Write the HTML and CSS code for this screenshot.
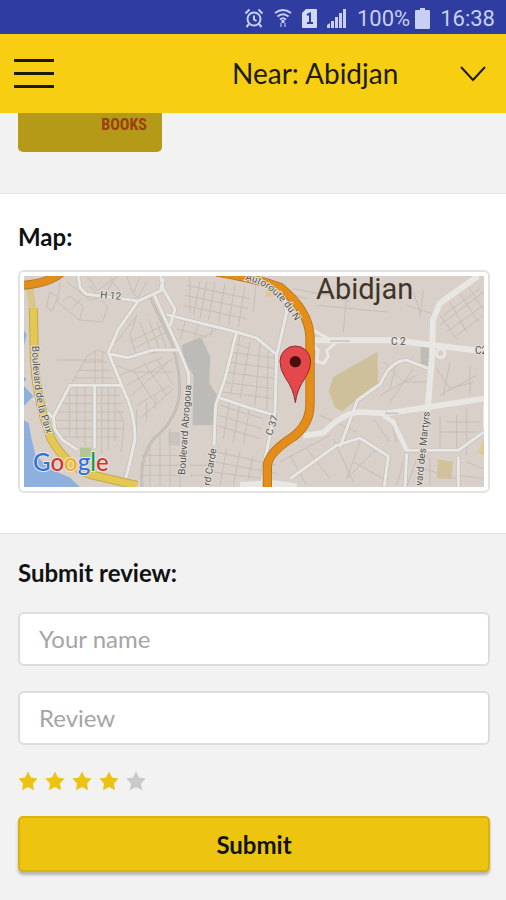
FILE: index.html
```html
<!DOCTYPE html>
<html lang="en">
<head>
    <meta charset="utf-8">
    <meta name="viewport" content="width=device-width, initial-scale=1">
    <title>Near: Abidjan</title>
    <link rel="stylesheet" href="styles.css">
</head>
<body>
    <div class="status-bar">
        <svg class="icon-alarm" width="20" height="20" viewBox="0 0 20 20" fill="none" stroke="#c9cff0" stroke-width="2">
            <circle cx="10" cy="11" r="6.5"/>
            <path d="M10 7.500v4l2.500 1.500M1.500 5.500l4-4M18.500 5.500l-4-4M5 16l-2.500 3M15 16l2.500 3"/>
        </svg>
        <svg class="icon-wifi" width="18" height="20" viewBox="0 0 18 20" fill="none" stroke="#c9cff0" stroke-width="2">
            <path d="M1 5Q9-1 17 5M3.500 8.500Q9 4 14.500 8.500M6 11.500Q9 9 12 11.500"/>
            <path d="M9 12v3" stroke-width="3"/>
            <path d="M7 15v4M11 15v4" stroke="#7f8bd4"/>
        </svg>
        <svg class="icon-sim" width="15" height="19" viewBox="0 0 15 19">
            <path d="M4 0h10a1 1 0 0 1 1 1v17a1 1 0 0 1-1 1H1a1 1 0 0 1-1-1V4z" fill="#d3d8f3"/>
            <path d="M5 6l3-1.500v9M5 14h6" fill="none" stroke="#2e3d9f" stroke-width="2"/>
        </svg>
        <svg class="icon-signal" width="20" height="19" viewBox="0 0 20 19" fill="#c9cff0">
            <path d="M0 19v-3l3-2v5zM4 12h3v7H4zM8 8h3v11H8zM12 4h3v15h-3zM16 0h3v19h-3z"/>
        </svg>
        <span class="battery-level">100%</span>
        <svg class="icon-battery" width="15" height="21" viewBox="0 0 15 21" fill="#c9cff0">
            <path d="M5 0h5v2h4a1 1 0 0 1 1 1v17a1 1 0 0 1-1 1H1a1 1 0 0 1-1-1V3a1 1 0 0 1 1-1h4z"/>
        </svg>
        <span>16:38</span>
    </div>

    <header class="header">
        <button class="menu-button" type="button" aria-label="Menu">
            <span></span><span></span><span></span>
        </button>
        <div class="location">
            <select aria-label="Location">
                <option>Near: Abidjan</option>
            </select>
            <svg class="chevron" width="26" height="16" viewBox="0 0 26 16" fill="none" stroke="#1c1a08" stroke-width="2">
                <path d="M1 1l12 13L25 1"/>
            </svg>
        </div>
    </header>

    <section class="photo-section">
        <div class="photo">BOOKS</div>
    </section>

    <section class="map-section">
        <h2>Map:</h2>
        <div class="map-frame">
            <svg class="map" viewBox="0 0 460 211" role="img" aria-label="Map of Abidjan">
                <defs>
                    <path id="paix" d="M8 70Q9 112 16 138L28 174"/>
                    <path id="autoroute" d="M221 4Q252 9 275 52"/>
                </defs>
                <rect width="460" height="211" fill="#d8d0c9"/>
                <g transform="scale(.33333) translate(-72 -42)" fill="none" stroke-linejoin="round">
                    <!-- water and parks -->
                    <path d="M72 205l8 15-8 30zM72 345l8 5-8 10zM72 372l28 30-28 30zM72 475l14 8 8 45 12 50 45 44 60 25 28 28H72z" fill="#8eb0df"/>
                    <path d="M240 557h35v32h-35z" fill="#b4c594"/>
                    <path d="M545 250l58-26 28 60-3 80 22 34-12 92h-60l2-150-30-55z" fill="#bdbbb8"/>
                    <path d="M505 510h35v40h-35z" fill="#c9c4bf"/>
                    <path d="M1000 345l132-75 2 100-60 40-48 38-20-10-20-50z" fill="#cfc09c"/>
                    <path d="M1314 592l44 8-4 52-44-4z" fill="#d3c298"/>
                    <path d="M1452 530v50l-18-10zM795 88h30v16h-25z" fill="#dcca91"/>
                    <path d="M1262 255h28v60l-28-12z" fill="#bfbcb8"/>

                    <!-- small streets -->
                    <g stroke="#c6bfb9" stroke-width="3">
                        <path d="M200 58l70 56 50-12M180 62l-8 58 66 54 70 6 16-50M148 92l26 12-18 44-16-12zM190 116l20-14 40 32-12 40M215 140l28-30M268 70l50 60"/>
                        <path d="M262 42l30 44 60-44M350 42l-30 46M380 42l20 54M330 50l30 38M420 45l-20 50 20 18M440 60l-25 45"/>
                        <path d="M170 294h142M212 370l50-90 30-15 32 10M250 300h72M238 325h92M225 348h114M285 268v104M308 270v102"/>
                        <path d="M190 400h170M178 425h190M170 450h200M165 475h205M170 500h200M190 525h165M305 375v200M325 375v190M345 378v160M230 378v155M255 378v175M208 390v130M352 440l20 40-8 90"/>
                        <path d="M410 160l-20 60 20 60 120-20M390 240l120-60M400 260l120-60M420 180l35 90M445 170l35 95M470 180l30 80M350 240l60-80"/>
                        <path d="M350 310l50 20 120 0M360 340l130-55M380 370l140-80M395 400l110-100M400 325l60 90M430 300l70 100M470 290l50 80M410 430l100-60M420 470l100-90M410 440v60M440 420v60M465 400v40"/>
                        <path d="M430 580h110M430 610h110M425 640h115M450 540v135M480 520v155M510 500v175M540 570v105M570 640h60M570 610h60"/>
                        <path d="M570 42v110M600 60l-20 100M620 60l-20 110M645 60l-20 115M675 65l-20 115M705 70l-20 120M735 75l-20 120M560 70l190 40M555 100l190 40M550 130l190 40M530 200l90 25M560 165l-20 70M600 180l-20 50M640 190l-10 35"/>
                        <path d="M690 240l60 20M685 270l150 20M680 300l150 20M672 330l150 20M668 360l150 20M665 390l160 20M720 220l-28 180M750 240l-30 170M780 245l-15 185M805 260l-5 180M660 430l130 40M655 460l130 40M650 490l130 40M690 410l-20 120M720 420l-20 120M750 430l-20 115M600 232l50-30"/>
                        <path d="M650 570l180 40M645 600l185 35M640 630l150 20M680 560l-20 110M720 570l-20 100M760 580l-20 90M800 600l-15 75"/>
                        <path d="M770 42l-10 110M850 90l70 20M880 80l100 20M950 130l210 20M1040 100l-10 110M960 90l90 30M1220 130l90 30M1240 90l20 60M1270 85l-10 80"/>
                        <path d="M1330 160l110-80M1320 190l130-100M1340 210l110-80M1370 220l80-60M1350 120l50 90M1380 95l55 85M1405 75l47 70M1320 160l50 70"/>
                        <path d="M1150 300l60 60 70 0M1140 400l110-60M1170 420l70-100M1190 300l-20 80M1310 320l40 60 70-20M1320 400l110-60M1350 300l-20 100M1410 310v90"/>
                        <path d="M960 460l110 50M920 560l70 90M870 580l50 90M840 600l150-80M1000 530l60 130M1080 540l-40 110M1130 560l-90 90M1060 600l90 50M1120 470l50 70M1170 460l20 80"/>
                        <path d="M1320 460v110M1340 480h100M1320 510h110M1370 460v110M1400 440v140M1210 600l-20 70M1250 590l-30 85M1270 620l100 30M1290 590v80M1400 600l50 20M1380 640l72 10"/>
                    </g>

                    <!-- railway -->
                    <path d="M450 105l52 110q35 70 37 160t-78 155q-45 60-34 145" stroke="#bdb7b2" stroke-width="8"/>
                    <path d="M450 105l52 110q35 70 37 160t-78 155q-45 60-34 145" stroke="#d0c9c3" stroke-width="3"/>

                    <!-- white roads -->
                    <g stroke="#c4bfba" stroke-width="13">
                        <path d="M235 42l5 35 20 20 155 20 75-35-8-40M415 117l-60 85-30 70 45 110q36 70 35 150l-20 90-10 33M325 275l60 12 75-23h80M463 100l75 165 28 70v40M490 82l35 60-15 50M490 50l-8 32M500 158l210 52 60 18 60 50M710 210l-35 140-28 80-5 120M660 408l90 30 75 22"/>
                        <path d="M100 410l60 58 5 35 22 30 45 30M160 465l50-95h155M284 373v185"/>
                        <path d="M850 90l10 60-30 130-5 170-30 140-10 80M1020 555l52-140 70-50q30-72 80-70l62 24M870 650l140-100 70-22 85 55-12 90M1180 475l40 90h155l77-55M1220 575l-5 100M1375 585v90M1452 430v70"/>
                    </g>
                    <g stroke="#e9e7e4" stroke-width="9">
                        <path d="M235 42l5 35 20 20 155 20 75-35-8-40M415 117l-60 85-30 70 45 110q36 70 35 150l-20 90-10 33M325 275l60 12 75-23h80M463 100l75 165 28 70v40M490 82l35 60-15 50M490 50l-8 32M500 158l210 52 60 18 60 50M710 210l-35 140-28 80-5 120M660 408l90 30 75 22"/>
                        <path d="M100 410l60 58 5 35 22 30 45 30M160 465l50-95h155M284 373v185"/>
                        <path d="M850 90l10 60-30 130-5 170-30 140-10 80M1020 555l52-140 70-50q30-72 80-70l62 24M870 650l140-100 70-22 85 55-12 90M1180 475l40 90h155l77-55M1220 575l-5 100M1375 585v90M1452 430v70"/>
                        <path d="M930 200l60 32M935 245l20 20-5 32 20 8 15-22-5-18 30-25"/>
                        <circle cx="1322" cy="274" r="13"/>
                    </g>
                    <g stroke="#e9e7e4">
                        <path d="M925 235h260l140 18 127 15" stroke-width="18"/>
                        <path d="M1434 42l-115 82-20 50-3 110-15 180" stroke-width="18"/>
                        <path d="M910 522l60-10q60-60 110-62l80 4 292-44" stroke-width="17"/>
                        <path d="M1150 460l30 20 40 85" stroke-width="14"/>
                        <path d="M720 670l110-5 60 10" stroke-width="20"/>
                    </g>
                    <path d="M990 237h60M1155 454h40" stroke="#c7c3bf" stroke-width="5"/>

                    <!-- yellow and orange roads -->
                    <path d="M90 80l8 60" stroke="#d8c78b" stroke-width="22"/>
                    <path d="M100 138l3 150q4 120 50 242 45 80 118 108l140 32" stroke="#c2aa48" stroke-width="27"/>
                    <path d="M100 138l3 150q4 120 50 242 45 80 118 108l140 32" stroke="#e5c854" stroke-width="21"/>
                    <path d="M66 70q80-5 120-40" stroke="#ad7628" stroke-width="27"/>
                    <path d="M66 70q80-5 120-40" stroke="#e38d1d" stroke-width="22"/>
                    <path d="M650 30q120 20 190 46 88 70 90 150v200q0 60-50 98-78 50-78 90v70" stroke="#b5721b" stroke-width="28"/>
                    <path d="M650 30q120 20 190 46 88 70 90 150v200q0 60-50 98-78 50-78 90v70" stroke="#e48d18" stroke-width="23"/>

                    <!-- marker -->
                    <path d="M886 422q-5-40-30-75-16-23-16-49a46 46 0 0 1 92 0q0 26-16 49-25 35-30 75z" fill="#e4474c" stroke="#8f2e30" stroke-width="3"/>
                    <circle cx="886" cy="299" r="17" fill="#490e10"/>
                </g>

                <g class="map-labels">
                    <text x="76" y="22" transform="rotate(5 76 22)">H 12</text>
                    <text x="367" y="69">C 2</text>
                    <text x="451" y="78">C2</text>
                    <text x="248" y="160" transform="rotate(-72 248 160)">C 37</text>
                    <text x="161" y="199" transform="rotate(-86 161 199)">Boulevard Abrogoua</text>
                    <text x="186" y="210" transform="rotate(-80 186 210)">rd Carde</text>
                    <text x="398" y="210" transform="rotate(-84 398 210)">vard des Martyrs</text>
                    <text><textPath href="#paix">Boulevard de la Paix</textPath></text>
                    <text><textPath href="#autoroute">Autoroute du N</textPath></text>
                </g>
                <text class="map-city" x="292" y="23">Abidjan</text>
                <text class="map-logo" x="9" y="195"><tspan fill="#2f72dc">G</tspan><tspan fill="#d9302a">o</tspan><tspan fill="#eeb111">o</tspan><tspan fill="#2f72dc">g</tspan><tspan fill="#219a48">l</tspan><tspan fill="#d9302a">e</tspan></text>
            </svg>
        </div>
    </section>

    <section class="review-section">
        <h2>Submit review:</h2>
        <form class="review-form">
            <input class="field" type="text" placeholder="Your name" aria-label="Your name">
            <input class="field" type="text" placeholder="Review" aria-label="Review">
            <div class="stars" role="radiogroup" aria-label="Rating">
                <input class="star" type="radio" name="rating" value="1" aria-label="1 star">
                <input class="star" type="radio" name="rating" value="2" aria-label="2 stars">
                <input class="star" type="radio" name="rating" value="3" aria-label="3 stars">
                <input class="star" type="radio" name="rating" value="4" aria-label="4 stars" checked>
                <input class="star" type="radio" name="rating" value="5" aria-label="5 stars">
            </div>
            <button class="submit-button" type="submit">Submit</button>
        </form>
    </section>
</body>
</html>
```

FILE: styles.css
```css
* {
    box-sizing: border-box;
}

body {
    margin: 0;
    min-height: 100vh;
    font-family: Lato, sans-serif;
    font-size: 24px;
    color: #111;
    background: #f2f2f2;
}

.status-bar {
    display: flex;
    align-items: center;
    justify-content: flex-end;
    height: 34px;
    padding: 2px 11px 0 0;
    background: #2e3d9f;
    color: #c9cff0;
    font-family: Roboto, sans-serif;
    font-size: 22px;
}

.icon-wifi,
.icon-sim,
.icon-signal {
    margin-left: 10px;
}

.battery-level {
    margin: 0 5px 0 10px;
}

.icon-battery {
    margin-right: 10px;
}

.header {
    display: flex;
    align-items: center;
    justify-content: space-between;
    height: 79px;
    padding: 0 20px 0 14px;
    background: #f7ce12;
}

.menu-button {
    display: flex;
    flex-direction: column;
    gap: 10px;
    padding: 0;
    border: none;
    background: none;
}

.menu-button span {
    width: 40px;
    height: 3px;
    background: #1c1a08;
}

.location {
    position: relative;
}

.location select {
    appearance: none;
    display: block;
    padding: 0 86px 2px 0;
    border: none;
    background: none;
    color: #1c1a08;
    font-family: inherit;
    font-size: 28px;
}

.chevron {
    position: absolute;
    right: 0;
    top: 10px;
    pointer-events: none;
}

.photo-section {
    height: 81px;
    padding: 0 16px 0 18px;
    border-bottom: 1px solid #e2e2e2;
}

.photo {
    width: 144px;
    height: 39px;
    padding-right: 15px;
    border-radius: 0 0 5px 5px;
    background: #b59a17;
    color: #9c3f12;
    font-family: "Roboto Condensed", Roboto, sans-serif;
    font-size: 16px;
    font-weight: bold;
    line-height: 24px;
    text-align: right;
}

h2 {
    margin: 0;
    font-size: 24px;
    font-weight: bold;
    line-height: 28px;
}

.map-section {
    padding: 29px 16px 40px 18px;
    border-bottom: 1px solid #e2e2e2;
    background: #fff;
}

.map-frame {
    margin-top: 19px;
    padding: 4px;
    border: 2px solid #e2e2e2;
    border-radius: 6px;
}

.map {
    display: block;
    width: 100%;
}

.map-labels {
    font-family: Roboto, sans-serif;
    font-size: 10px;
    fill: #555;
    stroke: #e4dfda;
    stroke-width: 2px;
    paint-order: stroke;
}

.map-city {
    font-family: Roboto, sans-serif;
    font-size: 29px;
    fill: #40352b;
}

.map-logo {
    font-size: 24px;
    font-weight: 500;
    stroke: #e9e5e0;
    stroke-width: 2px;
    paint-order: stroke;
}

.review-section {
    padding: 25px 16px 25px 18px;
}

.review-form {
    display: flex;
    flex-direction: column;
    gap: 25px;
    margin-top: 25px;
}

.field {
    width: 100%;
    height: 54px;
    padding: 0 19px 2px;
    border: 2px solid #dcdddd;
    border-radius: 6px;
    background: #fff;
    font-family: inherit;
    font-size: 24px;
}

.field::placeholder {
    color: #a5a5a5;
}

.stars {
    display: flex;
    gap: 7px;
    padding-top: 1px;
}

.star {
    appearance: none;
    width: 20px;
    height: 20px;
    margin: 0;
    background: #c9c9c9;
    clip-path: polygon(50% 2%, 65% 33%, 98% 38%, 75% 62%, 80% 96%, 50% 80%, 20% 96%, 25% 62%, 2% 38%, 35% 33%);
}

.star:checked,
.star:has(~ .star:checked) {
    background: #edc211;
}

.submit-button {
    height: 56px;
    border: 2px solid #d9b10c;
    border-radius: 5px;
    background: #edc511;
    box-shadow: 0 3px 3px rgba(0, 0, 0, 0.25);
    color: #111;
    font-family: inherit;
    font-size: 24px;
    font-weight: bold;
}
```
